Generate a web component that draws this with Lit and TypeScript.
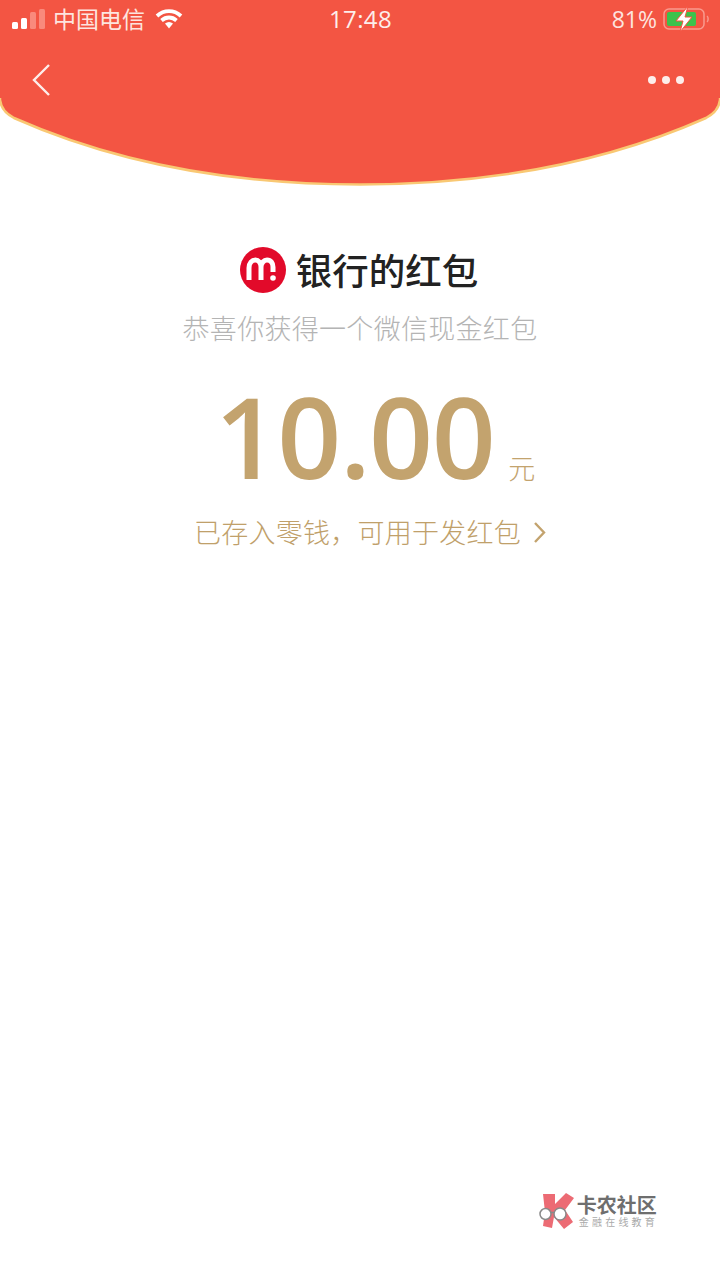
import { LitElement, html, css } from 'lit';
import { customElement } from 'lit/decorators.js';

@customElement('app-root')
export class AppRoot extends LitElement {
  static styles = css`
    :host {
      display: block;
      width: 720px;
      height: 1280px;
      overflow: hidden;
      background: #fff;
    }

    .page {
      display: flex;
      flex-direction: column;
      height: 100%;
      font-family: 'Noto Sans CJK SC', 'Noto Sans', sans-serif;
    }

    /* red header, the curve is just a background */
    .header {
      position: relative;
      height: 188px;
      flex: none;
    }

    .curve {
      position: absolute;
      inset: 0;
      width: 720px;
      height: 188px;
    }

    .status,
    .nav {
      position: relative;
    }

    .status {
      display: grid;
      grid-template-columns: 1fr auto 1fr;
      align-items: center;
      height: 38px;
      padding: 0 11px 0 12px;
      color: #fde4df;
      font-size: 23px;
    }

    .status-left,
    .status-right {
      display: flex;
      align-items: center;
    }

    .status-right {
      justify-content: flex-end;
    }

    .carrier {
      margin-left: 8px;
      line-height: 34px;
      transform: translateY(-1px);
    }

    .wifi {
      margin-left: 10px;
    }

    .time {
      font-family: 'Open Sans', sans-serif;
      font-size: 24px;
      line-height: 36px;
      letter-spacing: 0.4px;
      color: #fdeeeb;
    }

    .percent {
      font-family: 'Open Sans', sans-serif;
      font-size: 23px;
      line-height: 36px;
      margin-right: 6px;
    }

    .nav {
      display: flex;
      justify-content: space-between;
      align-items: center;
      height: 84px;
      padding: 0 36px 0 32px;
    }

    .dots {
      display: flex;
      gap: 6px;
    }

    .dots span {
      width: 8px;
      height: 8px;
      border-radius: 50%;
      background: #fdeeeb;
    }

    .main {
      display: flex;
      flex-direction: column;
      align-items: center;
      padding-top: 58px;
    }

    .title {
      display: flex;
      align-items: center;
      gap: 10px;
      height: 48px;
      margin-left: -2px;
      font-size: 36.500px;
      line-height: 48px;
      font-weight: 500;
      color: #222;
    }

    .sub {
      margin-top: 14px;
      font-size: 27px;
      line-height: 40px;
      font-weight: 300;
      letter-spacing: 0.3px;
      color: #b4b4b4;
    }

    .amount {
      display: flex;
      align-items: baseline;
      height: 130px;
      margin: 23px 0 0 30px;
      color: #c3a36e;
    }

    .value {
      font-family: 'Open Sans', sans-serif;
      font-size: 112px;
      font-weight: 600;
      line-height: 130px;
      letter-spacing: -1.500px;
    }

    .unit {
      margin-left: 14px;
      font-size: 27px;
      font-weight: 300;
    }

    .link {
      display: flex;
      align-items: center;
      margin: 11px 0 0 20px;
      font-size: 27px;
      line-height: 40px;
      font-weight: 300;
      letter-spacing: 0.25px;
      color: #c0a06a;
    }

    .link svg {
      margin-left: 12px;
    }

    .mark {
      display: flex;
      align-items: center;
      gap: 3px;
      margin: auto 62px 51px auto;
    }

    .mark-text {
      display: flex;
      flex-direction: column;
    }

    .mark-name {
      font-size: 20px;
      line-height: 23px;
      font-weight: 700;
      color: #6e6e6e;
    }

    .mark-sub {
      margin-left: 2px;
      font-size: 10px;
      line-height: 12px;
      letter-spacing: 3.2px;
      white-space: nowrap;
      color: #aaa;
    }
  `;

  render() {
    return html`
      <div class="page">
        <div class="header">
          <svg class="curve" viewBox="0 0 720 188">
            <path
              d="M0 0H720V100C719 108 714 114 706 118C600 165 480 184.500 360 184.500C240 184.500 120 165 14 118C6 114 1 108 0 100Z"
              fill="#f35543"
              stroke="#f9c873"
              stroke-width="2.500"
            ></path>
            <path d="M-2 -2H722V98H-2Z" fill="#f35543"></path>
          </svg>
          <div class="status">
            <div class="status-left">
              <svg width="33" height="24" viewBox="0 0 33 24">
                <rect x="0" y="15" width="6" height="7" rx="1.500" fill="#fff"></rect>
                <rect x="9" y="11" width="6" height="11" rx="1.500" fill="#fff"></rect>
                <rect x="18" y="5" width="6" height="17" rx="1.500" fill="#f98a7c"></rect>
                <rect x="27" y="2" width="6" height="20" rx="1.500" fill="#f98a7c"></rect>
              </svg>
              <span class="carrier">中国电信</span>
              <svg class="wifi" width="28" height="22" viewBox="0 0 28 22">
                <path d="M2 8C9 1.500 19 1.500 26 8" fill="none" stroke="#fff" stroke-width="3.800"></path>
                <path d="M6.500 12.500C11 8.500 17 8.500 21.500 12.500" fill="none" stroke="#fff" stroke-width="3.800"></path>
                <path d="M10 15.500C12.500 13.500 15.500 13.500 18 15.500L14 20.500Z" fill="#fff"></path>
              </svg>
            </div>
            <span class="time">17:48</span>
            <div class="status-right">
              <span class="percent">81%</span>
              <svg width="46" height="26" viewBox="0 0 46 26">
                <rect x="1" y="3" width="40" height="20" rx="5" fill="none" stroke="#f99a8e" stroke-width="1.500"></rect>
                <path d="M44 10C45.500 11 45.500 15 44 16" fill="none" stroke="#f99a8e" stroke-width="1.500"></path>
                <rect x="4" y="6" width="29" height="14" rx="2" fill="#3cc24c"></rect>
                <path d="M25 0L13 15H20L17 26L29 11H22Z" fill="#fff" stroke="#f35543" stroke-width="1"></path>
              </svg>
            </div>
          </div>
          <div class="nav">
            <svg width="20" height="34" viewBox="0 0 20 34">
              <path d="M17 2L2 17L17 32" fill="none" stroke="#fdeeeb" stroke-width="2.400"></path>
            </svg>
            <div class="dots"><span></span><span></span><span></span></div>
          </div>
        </div>
        <div class="main">
          <div class="title">
            <svg width="46" height="46" viewBox="0 0 46 46">
              <circle cx="23" cy="23" r="23" fill="#e20a2a"></circle>
              <path
                d="M9 33V21C9 16 12 13 15.500 13C18.500 13 21 16 21 20V33M21 20C21 16 24 13 27 13C31 13 33 16 33 20V25"
                fill="none"
                stroke="#fff"
                stroke-width="5"
              ></path>
              <circle cx="33" cy="31" r="2.800" fill="#fff"></circle>
            </svg>
            银行的红包
          </div>
          <div class="sub">恭喜你获得一个微信现金红包</div>
          <div class="amount">
            <span class="value">10.00</span>
            <span class="unit">元</span>
          </div>
          <div class="link">
            已存入零钱，可用于发红包
            <svg width="13" height="23" viewBox="0 0 13 23">
              <path d="M2 2L11 11.500L2 21" fill="none" stroke="#c3a36e" stroke-width="2.400"></path>
            </svg>
          </div>
        </div>
        <div class="mark">
          <svg width="35" height="37" viewBox="0 0 35 37">
            <path d="M4 2H16V12L27 1L35 6L26 18L34 30L25 37L15 25L13 36L4 34L6 20Z" fill="#ec6b74"></path>
            <circle cx="6.500" cy="22" r="5.500" fill="#fff" stroke="#8a8a8a" stroke-width="1.500"></circle>
            <circle cx="21" cy="22" r="6" fill="#fff" stroke="#8a8a8a" stroke-width="1.500"></circle>
            <path d="M12 20.500L15 20.500" stroke="#8a8a8a" stroke-width="1.500"></path>
          </svg>
          <div class="mark-text">
            <span class="mark-name">卡农社区</span>
            <span class="mark-sub">金融在线教育</span>
          </div>
        </div>
      </div>
    `;
  }
}
